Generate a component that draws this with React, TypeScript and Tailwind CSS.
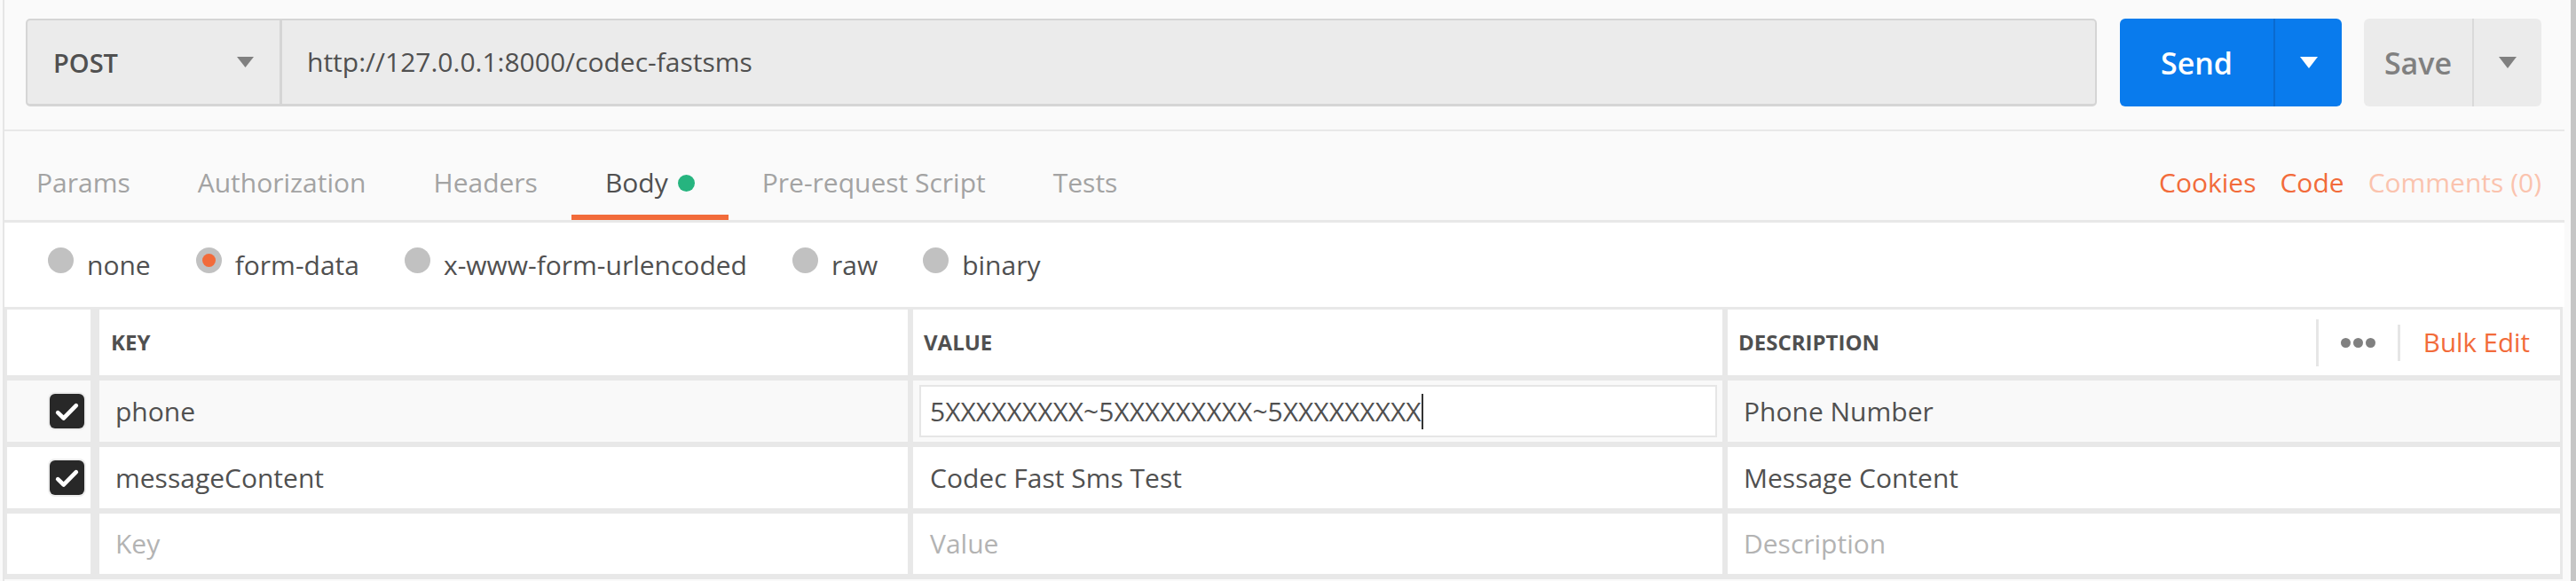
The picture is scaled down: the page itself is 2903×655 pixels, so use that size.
import React from "react";

function Caret({ color, w, h }: { color: string; w: number; h: number }) {
  return (
    <svg width={w} height={h} viewBox={`0 0 ${w} ${h}`} className="block">
      <polygon points={`0,0 ${w},0 ${w / 2},${h}`} fill={color} />
    </svg>
  );
}

function Check() {
  return (
    <span className="flex h-[39px] w-[39px] items-center justify-center rounded-[6px] bg-[#282828] ring-2 ring-[#ececec]">
      <svg width="33" height="33" viewBox="0 0 24 24" className="block">
        <path
          d="M4.5 13.2 L9.3 17.8 L19.5 7.4"
          fill="none"
          stroke="#ffffff"
          strokeWidth="3.4"
          strokeLinecap="round"
          strokeLinejoin="round"
        />
      </svg>
    </span>
  );
}

const tabs = [
  { label: "Params", active: false },
  { label: "Authorization", active: false },
  { label: "Headers", active: false },
  { label: "Body", active: true },
  { label: "Pre-request Script", active: false },
  { label: "Tests", active: false },
];

const radios = [
  { label: "none", selected: false },
  { label: "form-data", selected: true },
  { label: "x-www-form-urlencoded", selected: false },
  { label: "raw", selected: false },
  { label: "binary", selected: false },
];

export default function App() {
  return (
    <div className="flex h-[655px] w-[2903px] overflow-hidden bg-[#fafafa] pl-[3px] font-['Open_Sans',sans-serif] text-[30px] text-[#505050]">
      <div className="flex min-w-0 flex-1 flex-col border-l-2 border-[#e6e6e6]">
        {/* Top request bar */}
        <div className="flex h-[148px] shrink-0 items-start gap-[25px] border-b-2 border-[#e8e8e8] pl-[24px] pr-[26px] pt-[21px]">
          <div className="flex h-[99px] min-w-0 flex-1 rounded-[5px] border-x-2 border-t-2 border-b-[3px] border-[#d5d5d5] bg-[#ebebeb]">
            <div className="flex w-[287px] shrink-0 items-center justify-between border-r-[3px] border-[#d5d5d5] pl-[29px] pr-[29px]">
              <span className="text-[29px] font-semibold leading-none">POST</span>
              <Caret color="#808080" w={19} h={12} />
            </div>
            <div className="flex flex-1 items-center pl-[28px]">
              <span className="leading-none">http://127.0.0.1:8000/codec-fastsms</span>
            </div>
          </div>
          <div className="ml-[1px] flex h-[99px] w-[250px] shrink-0 rounded-[6px] bg-[#097bed] text-white">
            <div className="flex w-[175px] items-center justify-center border-r-2 border-[#0a6bd0] text-[34px] font-semibold leading-none">
              Send
            </div>
            <div className="flex flex-1 items-center justify-center">
              <Caret color="#ffffff" w={20} h={13} />
            </div>
          </div>
          <div className="flex h-[99px] w-[200px] shrink-0 rounded-[6px] bg-[#ebebeb] text-[#808080]">
            <div className="flex w-[124px] items-center justify-center border-r-2 border-[#d9d9d9] text-[34px] font-semibold leading-none">
              Save
            </div>
            <div className="flex flex-1 items-center justify-center">
              <Caret color="#808080" w={20} h={13} />
            </div>
          </div>
        </div>

        {/* Tabs */}
        <div className="flex h-[103px] shrink-0 items-stretch justify-between border-b-[3px] border-[#e8e8e8] pr-[26px]">
          <div className="-ml-[2px] flex items-stretch">
            {tabs.map((t) => (
              <div
                key={t.label}
                className={
                  t.active
                    ? "flex items-center border-b-[6px] border-[#f26b3a] px-[38px] pt-[22px] text-[#505050]"
                    : "flex items-center border-b-[6px] border-transparent px-[38px] pt-[22px] text-[#a3a3a3]"
                }
              >
                <span className="leading-none">{t.label}</span>
                {t.active && <span className="ml-[11px] h-[19px] w-[19px] rounded-full bg-[#26b47f]" />}
              </div>
            ))}
          </div>
          <div className="flex items-center gap-[27px] pb-[6px] pt-[22px]">
            <span className="leading-none text-[#f26b3a]">Cookies</span>
            <span className="leading-none text-[#f26b3a]">Code</span>
            <span className="leading-none text-[#fac3ae]">Comments (0)</span>
          </div>
        </div>

        {/* Body type radios */}
        <div className="flex h-[95px] shrink-0 items-center bg-white pl-[49px]">
          {radios.map((r) => (
            <div key={r.label} className="mr-[51px] flex items-center">
              <span className="mb-[10px] mr-[15px] flex h-[29px] w-[29px] items-center justify-center rounded-full bg-[#c1c1c1]">
                {r.selected && <span className="h-[15px] w-[15px] rounded-full bg-[#f26b3a]" />}
              </span>
              <span className="leading-none">{r.label}</span>
            </div>
          ))}
        </div>

        {/* Key / value table */}
        <div className="mr-[2px] grid shrink-0 grid-cols-[98px_911px_912px_1fr] grid-rows-[74px_69px_69px_68px] gap-[6px] bg-[#e8e8e8] pb-[6px] pl-[3px] pr-[3px] pt-[3px]">
          {/* header */}
          <div className="mr-[4px] bg-white" />
          <div className="flex items-center bg-white pl-[13px] text-[24px] font-bold leading-none">KEY</div>
          <div className="flex items-center bg-white pl-[12px] text-[24px] font-bold leading-none">VALUE</div>
          <div className="flex items-center justify-between bg-white pl-[12px] pr-[34px]">
            <span className="text-[24px] font-bold leading-none">DESCRIPTION</span>
            <div className="flex items-center">
              <span className="h-[53px] w-[3px] bg-[#e6e6e6]" />
              <span className="ml-[25px] flex gap-[3px]">
                <span className="h-[11px] w-[11px] rounded-full bg-[#808080]" />
                <span className="h-[11px] w-[11px] rounded-full bg-[#808080]" />
                <span className="h-[11px] w-[11px] rounded-full bg-[#808080]" />
              </span>
              <span className="ml-[25px] h-[41px] w-[3px] bg-[#e6e6e6]" />
              <span className="ml-[26px] text-[29.5px] leading-none text-[#f26b3a]">Bulk Edit</span>
            </div>
          </div>

          {/* row 1 */}
          <div className="mr-[4px] flex items-center justify-end bg-[#f9f9f9] pr-[7px]">
            <Check />
          </div>
          <div className="flex items-center bg-[#f9f9f9] pl-[18px]">
            <span className="leading-none">phone</span>
          </div>
          <div className="flex bg-[#f9f9f9] py-[5px] pl-[7px] pr-[6px]">
            <div className="flex flex-1 items-center border-2 border-[#e6e6e6] bg-white pl-[10px]">
              <span className="leading-none">5XXXXXXXXX~5XXXXXXXXX~5XXXXXXXXX</span>
              <span className="h-[40px] w-[2px] bg-[#333333]" />
            </div>
          </div>
          <div className="flex items-center bg-[#f9f9f9] pl-[18px]">
            <span className="leading-none">Phone Number</span>
          </div>

          {/* row 2 */}
          <div className="mr-[4px] flex items-center justify-end bg-white pr-[7px]">
            <Check />
          </div>
          <div className="flex items-center bg-white pl-[18px]">
            <span className="leading-none">messageContent</span>
          </div>
          <div className="flex items-center bg-white pl-[19px]">
            <span className="leading-none">Codec Fast Sms Test</span>
          </div>
          <div className="flex items-center bg-white pl-[18px]">
            <span className="leading-none">Message Content</span>
          </div>

          {/* row 3 (placeholders) */}
          <div className="mr-[4px] bg-white" />
          <div className="flex items-center bg-white pl-[18px] text-[#b3b3b3]">
            <span className="leading-none">Key</span>
          </div>
          <div className="flex items-center bg-white pl-[19px] text-[#b3b3b3]">
            <span className="leading-none">Value</span>
          </div>
          <div className="flex items-center bg-white pl-[18px] text-[#b3b3b3]">
            <span className="leading-none">Description</span>
          </div>
        </div>
      </div>
      <div className="w-[7px] shrink-0" />
      <div className="w-[6px] shrink-0 bg-[#c6c6c6]" />
    </div>
  );
}
